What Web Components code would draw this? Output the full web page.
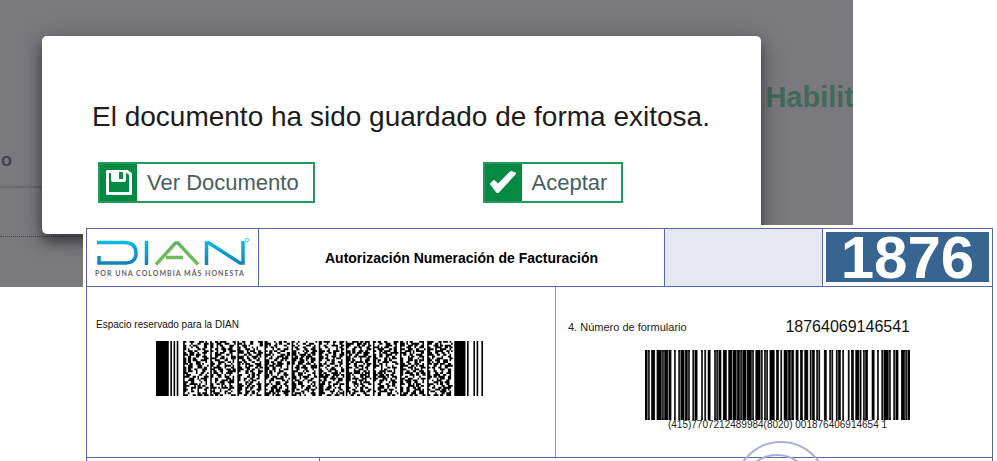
<!DOCTYPE html>
<html lang="es">
<head>
<meta charset="utf-8">
<title>Autorización Numeración de Facturación</title>
<style>
body { margin: 0; background: #fff; font-family: "Liberation Sans", Arial, sans-serif; color: #111; overflow: hidden; }
</style>
</head>
<body>
<app-stage>
  <dimmed-page slot="back">
    <save-dialog>
      El documento ha sido guardado de forma exitosa.
      <icon-button slot="actions" icon="save">Ver Documento</icon-button>
      <icon-button slot="actions" icon="check">Aceptar</icon-button>
    </save-dialog>
  </dimmed-page>
  <form-sheet slot="front"></form-sheet>
</app-stage>

<script>
class Base extends HTMLElement {
  constructor() {
    super();
    this.attachShadow({ mode: "open" });
  }
  connectedCallback() {
    this.shadowRoot.innerHTML = this.render();
  }
}

/* Two layers sharing one grid cell: dimmed page behind, form sheet in front. */
customElements.define("app-stage", class extends Base {
  render() {
    return `<style>
      :host { display: grid; height: 100vh; grid-template: 1fr / 1fr; overflow: hidden; }
      ::slotted(*) { grid-area: 1 / 1; }
      ::slotted([slot=back]) { width: 85.6%; align-self: start; }
      ::slotted([slot=front]) { margin: 225px 0 0 83px; z-index: 1; }
    </style><slot name="back"></slot><slot name="front"></slot>`;
  }
});

customElements.define("dimmed-page", class extends Base {
  render() {
    return `<style>
      :host { display: grid; grid-template-columns: 42px minmax(0, 1fr) 92px; background: #7a797e; overflow: hidden; color: #464549; }
      .left { grid-area: 1 / 1; padding-top: 150px; font-size: 18px; line-height: 20px; font-weight: bold; }
      .left span { display: block; padding: 0 0 16px 1px; border-bottom: 2px solid #6c6b6f; }
      .rule { height: 48px; width: 84px; border-bottom: 1px dotted #464549; }
      .mid { grid-area: 1 / 2; padding: 36px 0 53px; z-index: 1; }
      h2 { grid-area: 1 / 3; margin: 0; padding: 79px 0 0 4px; font-size: 29px; line-height: 36px; color: #426a58; white-space: nowrap; }
    </style>
    <div class="left"><span>o</span><div class="rule"></div></div>
    <div class="mid"><slot></slot></div>
    <h2>Habilit</h2>`;
  }
});

customElements.define("save-dialog", class extends Base {
  render() {
    return `<style>
      :host { display: block; background: #fff; border-radius: 5px; padding: 64px 50px 31px; box-shadow: 0 8px 12px rgba(0,0,0,.4), 0 4px 26px rgba(0,0,0,.25); }
      p { margin: 0 0 28px; font-size: 28px; line-height: 34px; color: #1c1c1e; white-space: nowrap; }
      .actions { display: flex; justify-content: space-between; padding: 0 88px 0 6px; }
    </style>
    <div role="dialog"><p><slot></slot></p><div class="actions"><slot name="actions"></slot></div></div>`;
  }
});

const ICONS = {
  save: `<path fill="none" stroke="#fff" stroke-width="3" stroke-linejoin="round" d="M2.500 2.500H22L25.500 5V24.500H2.500Z"/><path fill="#fff" d="M6 2H21V11Q21 13 19 13H8Q6 13 6 11Z"/><path fill="#068943" d="M14 3H18V10H14ZM5 4H6V12H5Z"/>`,
  check: `<path fill="#fff" stroke="#fff" stroke-width="2" stroke-linejoin="round" d="M2 15L5 12L9 16L22 3L26 4.500L9 23H8Z"/>`
};
customElements.define("icon-button", class extends Base {
  render() {
    return `<style>
      :host { display: block; }
      button { display: flex; align-items: stretch; padding: 0; border: 2px solid #24995b; background: #fff; font: 22px/37px "Liberation Sans", Arial, sans-serif; color: #46605f; cursor: pointer; white-space: nowrap; }
      .icon { display: flex; align-items: center; justify-content: center; width: 37px; background: #068943; }
      .text { padding: 0 14px 0 10px; }
    </style>
    <button type="button"><span class="icon"><svg width="28" height="27" viewBox="0 0 28 27" aria-hidden="true">${ICONS[this.getAttribute("icon")]}</svg></span><span class="text"><slot></slot></span></button>`;
  }
});

/* Turns alternating bar/space widths into one path, a row high. */
const bars = (widths, x, y, h) => {
  let d = "";
  widths.forEach((w, i) => {
    if (i % 2 === 0) d += `M${x} ${y}h${w}v${h}h-${w}z`;
    x += w;
  });
  return d;
};

/* Stacked barcode: start pattern, ten 17-module columns, stop pattern. */
customElements.define("stacked-code", class extends Base {
  render() {
    const rows = 30, cols = 10;
    let seed = 1876, d = bars([8,1,1,1,1,1,1,3], 0, 0, rows);
    const rnd = n => { seed = (seed * 1103515245 + 12345) % 2147483648; return Math.floor(seed / 2147483648 * n); };
    for (let r = 0; r < rows; r++) for (let c = 0; c < cols; c++) {
      const w = [1,1,1,1,1,1,1,1];
      for (let k = 0; k < 9; k++) w[rnd(8)]++;
      d += bars(w, 17 + c * 17, r, 1);
    }
    d += bars([7,1,1,3,1,1,1,2,1], 187, 0, rows);
    return `<style>:host { display: block; } svg { display: block; width: 100%; height: 55px; }</style>
      <svg viewBox="0 0 205 ${rows}" preserveAspectRatio="none" role="img" aria-label="PDF417"><path d="${d}"/></svg>`;
  }
});

/* Code 128 set C. */
const C128 = { 0:"212222", 12:"112232", 14:"122231", 18:"223211", 20:"221231", 40:"231113", 41:"231311", 48:"313121", 57:"312113", 65:"121124", 69:"112214", 70:"112412", 72:"122411", 76:"221114", 80:"111242", 84:"124112", 98:"411311", 99:"113141", 102:"411131", 105:"211232", 106:"2331112" };
customElements.define("linear-code", class extends Base {
  render() {
    const seq = [105,102,41,57,70,72,12,48,99,84,80,20,0,18,76,40,69,14,65,41,98,106];
    const w = seq.map(v => C128[v]).join("").split("").map(Number);
    return `<style>
      :host { display: block; text-align: center; }
      svg { display: block; width: 100%; height: 70px; }
      span { display: block; font-size: 10px; line-height: 10px; white-space: nowrap; color: #222; }
    </style>
    <svg viewBox="0 0 244 10" preserveAspectRatio="none" role="img" aria-label="Code 128"><path stroke="#000" stroke-width=".5" d="${bars(w, 0, 0, 10)}"/></svg>
    <span>(415)7707212489984(8020) 001876406914654 1</span>`;
  }
});

customElements.define("dian-logo", class extends Base {
  render() {
    return `<style>
      :host { display: flex; flex-direction: column; padding: 8px 8px 0; }
      svg { display: block; width: 154px; height: 32px; }
      span { font: bold 7px/8px Lato, sans-serif; letter-spacing: 1px; color: #666; white-space: nowrap; }
    </style>
    <svg viewBox="0 0 154 32" fill="none" role="img" aria-label="DIAN">
      <defs>
        <linearGradient id="b" gradientUnits="userSpaceOnUse" x1="0" y1="4" x2="0" y2="28"><stop stop-color="#09b9e4"/><stop offset="1" stop-color="#147fb5"/></linearGradient>
        <linearGradient id="g" gradientUnits="userSpaceOnUse" x1="0" y1="4" x2="0" y2="28"><stop stop-color="#62b36a"/><stop offset="1" stop-color="#78bd57"/></linearGradient>
      </defs>
      <g stroke="url(#b)" stroke-width="3.500">
        <path d="M2 5.500H29Q41 5.500 41 16T29 26H4V19"/>
        <path d="M51.500 4V28"/>
        <path d="M111.500 28V6H114L145 26H148V4"/>
      </g>
      <path stroke="url(#g)" stroke-width="3.500" d="M61 27.500L80.500 6H83L103 27.500M71 20.500H88"/>
      <circle cx="152" cy="3" r="1.800" stroke="#5bc4e0" stroke-width="1"/>
    </svg>
    <span>POR UNA COLOMBIA MÁS HONESTA</span>`;
  }
});

customElements.define("form-sheet", class extends Base {
  render() {
    return `<style>
      :host { display: flex; flex-direction: column; background: #fff; padding: 3px 4px 0 3px; --line: #536aa5; min-height: 0; }
      .head, .body, .foot { display: grid; border: 1px solid var(--line); border-bottom: 0; }
      .head { grid-template-columns: 171fr 406fr 158fr 170fr; height: 57px; }
      .head > * + * { border-left: 1px solid var(--line); }
      h1 { margin: 0; font-size: 14px; line-height: 58px; text-align: center; color: #000; white-space: nowrap; }
      .blank { background: #e5e8f1; }
      .num { padding: 3px; display: grid; }
      .num b { background: #386492; color: #fff; font-size: 60px; line-height: 52px; text-align: center; height: 50px; }
      .body { grid-template-columns: 469fr 436fr; height: 170px; }
      .body > * + * { border-left: 1px solid #8d9ac3; }
      .dian { padding: 32px 0 0 9px; font-size: 10px; line-height: 12px; }
      stacked-code { width: 327px; margin: 10px 0 0 60px; }
      .form { padding: 30px 82px 0 12px; }
      .row { display: flex; justify-content: space-between; align-items: center; font-size: 11px; line-height: 20px; color: #222; }
      .row strong { font-weight: normal; font-size: 16px; color: #111; }
      linear-code { margin: 13px 0 0 77px; width: 265px; }
      .foot { position: relative; flex: 1; grid-template-columns: 232fr 673fr; }
      .foot > div + div { border-left: 1px solid var(--line); }
      .stamp { position: absolute; right: 168px; top: -18px; }
    </style>
    <div class="head"><dian-logo></dian-logo><h1>Autorización Numeración de Facturación</h1><div class="blank"></div><div class="num"><b>1876</b></div></div>
    <div class="body">
      <section class="dian">Espacio reservado para la DIAN<stacked-code></stacked-code></section>
      <section class="form"><div class="row"><span>4. Número de formulario</span><strong>18764069146541</strong></div><linear-code></linear-code></section>
    </div>
    <div class="foot"><div></div><div></div>
      <svg class="stamp" width="84" height="22" viewBox="0 0 84 22" fill="none" stroke="#a9b0d6" stroke-width="2" aria-hidden="true"><circle cx="41" cy="48" r="46"/><circle cx="37" cy="50" r="35"/></svg>
    </div>`;
  }
});
</script>
</body>
</html>
